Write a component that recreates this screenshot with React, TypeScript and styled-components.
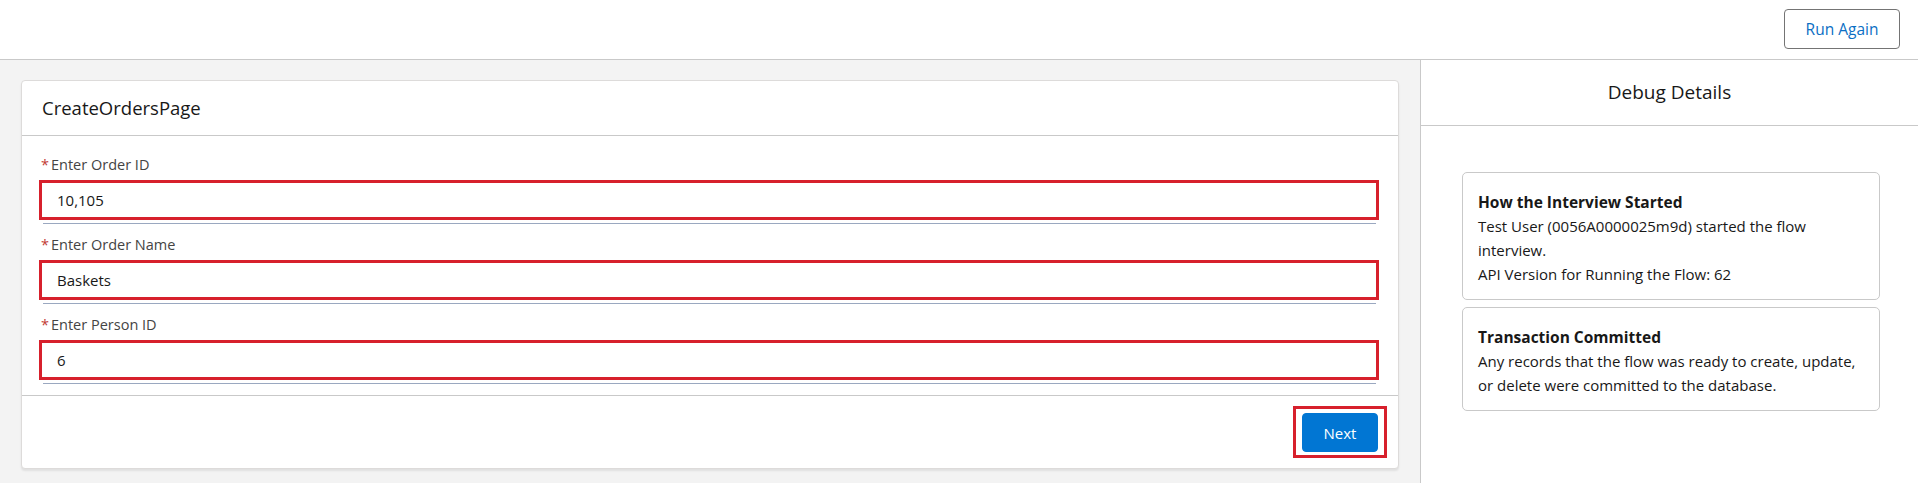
import React from 'react';
import styled, { createGlobalStyle } from 'styled-components';

const GlobalStyle = createGlobalStyle`
    html, body {
        margin: 0;
        padding: 0;
        background: #ffffff;
        overflow: hidden;
    }
    body {
        font-family: "Open Sans", "Noto Sans", Arial, sans-serif;
        color: #181818;
    }
    * {
        box-sizing: border-box;
    }
`;

const Page = styled.div`
    display: flex;
    flex-direction: column;
    width: 1918px;
    height: 483px;
`;

const TopBar = styled.header`
    height: 60px;
    flex: 0 0 60px;
    display: flex;
    align-items: center;
    justify-content: flex-end;
    padding: 0 18px 1px 0;
    border-bottom: 1px solid #c9c9c9;
    background: #ffffff;
`;

const NeutralButton = styled.button`
    width: 116px;
    height: 40px;
    border: 1px solid #747474;
    border-radius: 4px;
    background: #ffffff;
    color: #0b6fc4;
    font-family: inherit;
    font-size: 15.5px;
    cursor: pointer;
`;

const Body = styled.div`
    flex: 1;
    display: flex;
    min-height: 0;
`;

const Stage = styled.main`
    flex: 0 0 1420px;
    background: #f3f3f3;
    padding: 20px 21px 0 21px;
`;

const Card = styled.section`
    background: #ffffff;
    border: 1px solid #dddbda;
    border-radius: 4px;
    box-shadow: 0 2px 2px rgba(0, 0, 0, 0.08);
`;

const CardHeader = styled.div`
    height: 55px;
    display: flex;
    align-items: center;
    padding: 0 20px 2px;
    border-bottom: 1px solid #c9c9c9;
`;

const CardTitle = styled.h2`
    margin: 0;
    font-size: 18.5px;
    font-weight: 400;
`;

const CardBody = styled.div`
    padding: 19px 19px 11px 17px;
`;

const Field = styled.div`
    & + & {
        margin-top: 11px;
    }
`;

const Label = styled.label`
    display: block;
    height: 20px;
    line-height: 20px;
    margin-bottom: 5px;
    font-size: 14.5px;
    color: #444444;
`;

const Required = styled.abbr`
    color: #c23934;
    text-decoration: none;
    margin: 0 2px 0 2px;
`;

const Input = styled.input`
    display: block;
    width: 100%;
    height: 40px;
    border: 3px solid #d7202c;
    background: #ffffff;
    padding: 0 12px 0 15px;
    font-family: inherit;
    font-size: 15px;
    color: #181818;
    outline: none;
`;

const Underline = styled.div`
    height: 1px;
    margin: 3px 3px 0 4px;
    background: #9aa8c0;
`;

const CardFooter = styled.div`
    display: flex;
    justify-content: flex-end;
    padding: 10px 11px 10px;
    border-top: 1px solid #c9c9c9;
`;

const Highlight = styled.div`
    border: 3px solid #d7202c;
    padding: 4px 6px 3px;
`;

const BrandButton = styled.button`
    width: 76px;
    height: 39px;
    border: 1px solid #0176d3;
    border-radius: 4px;
    background: #0176d3;
    color: #ffffff;
    font-family: inherit;
    font-size: 15px;
    cursor: pointer;
`;

const DebugPanel = styled.aside`
    flex: 1;
    border-left: 1px solid #c9c9c9;
    background: #ffffff;
`;

const PanelHeader = styled.div`
    height: 66px;
    display: flex;
    align-items: center;
    justify-content: center;
    border-bottom: 1px solid #c9c9c9;
    padding-bottom: 2px;
`;

const PanelTitle = styled.h2`
    margin: 0;
    font-size: 19px;
    font-weight: 400;
`;

const PanelBody = styled.div`
    padding: 46px 38px 0 41px;
`;

const DebugCard = styled.div`
    border: 1px solid #c9c9c9;
    border-radius: 5px;
    padding: 17px 15px 13px;
    font-size: 15px;
    line-height: 24px;

    & + & {
        margin-top: 7px;
    }
`;

const DebugHeading = styled.div`
    font-weight: 700;
    font-size: 15.5px;
`;

const DebugLine = styled.div``;

const fields = [
    { label: 'Enter Order ID', value: '10,105' },
    { label: 'Enter Order Name', value: 'Baskets' },
    { label: 'Enter Person ID', value: '6' },
];

const debugEntries = [
    {
        heading: 'How the Interview Started',
        lines: ['Test User (0056A0000025m9d) started the flow interview.', 'API Version for Running the Flow: 62'],
    },
    {
        heading: 'Transaction Committed',
        lines: ['Any records that the flow was ready to create, update, or delete were committed to the database.'],
    },
];

const App: React.FunctionComponent = () => (
    <Page>
        <GlobalStyle />
        <TopBar>
            <NeutralButton type="button">Run Again</NeutralButton>
        </TopBar>
        <Body>
            <Stage>
                <Card>
                    <CardHeader>
                        <CardTitle>CreateOrdersPage</CardTitle>
                    </CardHeader>
                    <CardBody>
                        {fields.map((f) => (
                            <Field key={f.label}>
                                <Label>
                                    <Required title="required">*</Required>
                                    {f.label}
                                </Label>
                                <Input defaultValue={f.value} />
                                <Underline />
                            </Field>
                        ))}
                    </CardBody>
                    <CardFooter>
                        <Highlight>
                            <BrandButton type="button">Next</BrandButton>
                        </Highlight>
                    </CardFooter>
                </Card>
            </Stage>
            <DebugPanel>
                <PanelHeader>
                    <PanelTitle>Debug Details</PanelTitle>
                </PanelHeader>
                <PanelBody>
                    {debugEntries.map((entry) => (
                        <DebugCard key={entry.heading}>
                            <DebugHeading>{entry.heading}</DebugHeading>
                            {entry.lines.map((line) => (
                                <DebugLine key={line}>{line}</DebugLine>
                            ))}
                        </DebugCard>
                    ))}
                </PanelBody>
            </DebugPanel>
        </Body>
    </Page>
);

export default App;
